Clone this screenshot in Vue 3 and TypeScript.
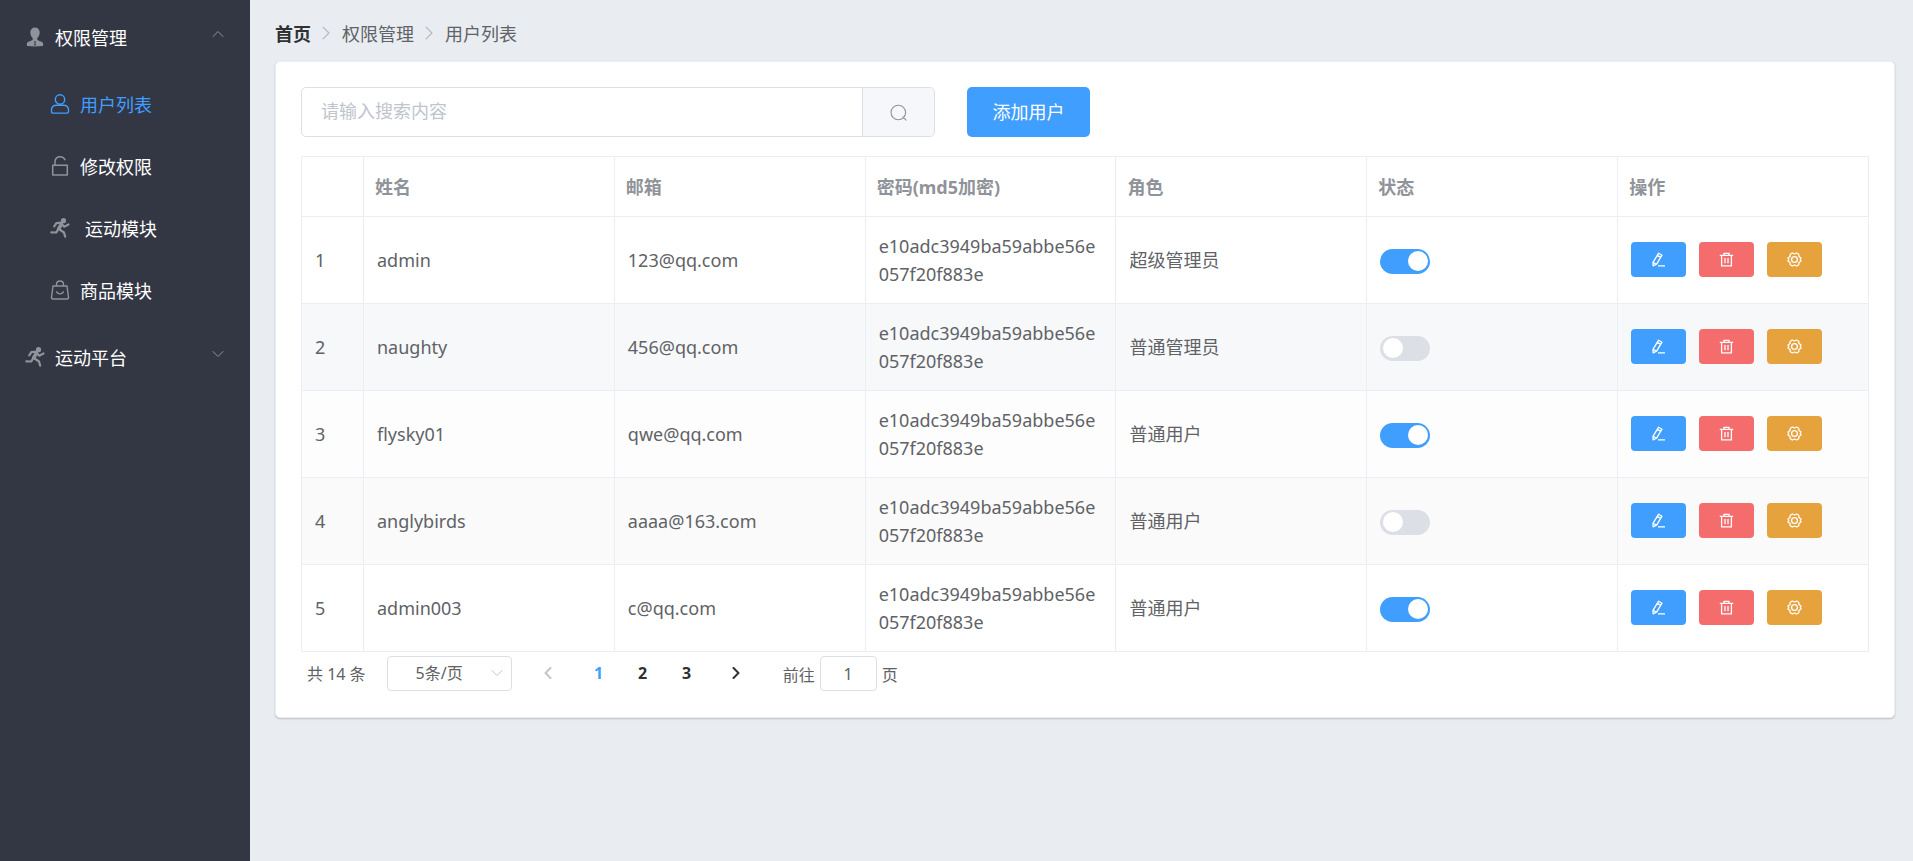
<script setup lang="ts">
import { ref } from 'vue'

type IconName = 'user' | 'lock' | 'run' | 'bag'

interface MenuItem {
  title: string
  icon: IconName
  active?: boolean
}

interface User {
  id: number
  name: string
  email: string
  password: string
  role: string
  enabled: boolean
}

const menuItems: MenuItem[] = [
  { title: '用户列表', icon: 'user', active: true },
  { title: '修改权限', icon: 'lock' },
  { title: '运动模块', icon: 'run' },
  { title: '商品模块', icon: 'bag' },
]

const columns = ['', '姓名', '邮箱', '密码(md5加密)', '角色', '状态', '操作']
const hash = 'e10adc3949ba59abbe56e057f20f883e'

const users = ref<User[]>([
  { id: 1, name: 'admin', email: '123@qq.com', password: hash, role: '超级管理员', enabled: true },
  { id: 2, name: 'naughty', email: '456@qq.com', password: hash, role: '普通管理员', enabled: false },
  { id: 3, name: 'flysky01', email: 'qwe@qq.com', password: hash, role: '普通用户', enabled: true },
  { id: 4, name: 'anglybirds', email: 'aaaa@163.com', password: hash, role: '普通用户', enabled: false },
  { id: 5, name: 'admin003', email: 'c@qq.com', password: hash, role: '普通用户', enabled: true },
])

const query = ref('')
const pageSize = ref(5)
const page = ref(1)
const pages = [1, 2, 3]
</script>

<template>
  <div class="layout">
    <svg class="defs" aria-hidden="true">
      <symbol id="i-solid" viewBox="0 0 20 20">
        <path fill="currentColor" d="M10 .5c2.800 0 4.700 2 4.700 5 0 2.200-.9 4.300-2.400 5.500v1.600c.3.700 1 1 2 1.300 2.300.6 3.900 1.200 3.900 3.100 0 1.400-.2 2-.9 2-2.200.3-4.700.5-7.300.5s-5.100-.2-7.300-.5c-.7 0-.9-.6-.9-2 0-1.900 1.600-2.500 3.900-3.100 1-.3 1.700-.6 2-1.300V11C6.200 9.800 5.300 7.700 5.300 5.500c0-3 1.900-5 4.700-5Z" />
        <path fill="#333744" opacity=".65" d="M9.300 14h1.400l.4 1-.5.8.5 2.500-1.100.8-1.100-.8.5-2.500-.5-.8Z" />
      </symbol>
      <symbol id="i-user" viewBox="0 0 20 20">
        <g fill="none" stroke="currentColor" stroke-width="1.400">
          <circle cx="10" cy="5.500" r="4.700" />
          <path d="M1.500 16.200c0-3.300 2.500-4.900 5.300-4.900h6.400c2.800 0 5.300 1.600 5.300 4.900v1.300c0 1-.6 1.600-1.600 1.600H3.100c-1 0-1.600-.6-1.600-1.600Z" />
        </g>
      </symbol>
      <symbol id="i-lock" viewBox="0 0 20 20">
        <path fill="none" stroke="currentColor" stroke-width="1.500" stroke-linejoin="round" d="M2.700 9.300h14.600v9.800H2.700ZM5 9V5.600C5 2.600 7.200.8 10 .8c2.500 0 4.300 1.300 5.200 3.500" />
      </symbol>
      <symbol id="i-run" viewBox="0 0 20 20">
        <g fill="none" stroke="currentColor" stroke-width="2.200" stroke-linecap="round" stroke-linejoin="round">
          <path d="m4.200 8.300 2.300-3.300 5-.3M12.200 6.500l2 2.200 4.300-2.200" />
          <path stroke-width="3.600" d="m11.400 6.200-2.500 4.300" />
          <path d="m8.500 10.500-2.200 4-5-.2M9.500 11.500l4.500 3 1.200 4.200" />
        </g>
        <circle cx="13.500" cy="2.700" r="2.600" fill="currentColor" />
      </symbol>
      <symbol id="i-bag" viewBox="0 0 20 20">
        <g fill="none" stroke="currentColor" stroke-width="1.400" stroke-linejoin="round" stroke-linecap="round">
          <path d="M3 6h14l1.500 11.300c.1 1-.4 1.700-1.400 1.700H2.900c-1 0-1.500-.7-1.400-1.700ZM6.500 6V4.500C6.500 2.500 8 1 10 1s3.500 1.500 3.500 3.500V6M6.600 11.800c1.600 2.800 5.200 2.800 6.800 0" />
        </g>
      </symbol>
      <symbol id="i-chevron" viewBox="0 0 12 12">
        <path fill="none" stroke="currentColor" stroke-linecap="round" stroke-linejoin="round" d="m1 3.500 5 5 5-5" />
      </symbol>
      <symbol id="i-search" viewBox="0 0 18 18">
        <path fill="none" stroke="currentColor" stroke-width="1.200" stroke-linecap="round" d="M13.600 13.600 17 17M16.500 9a7.700 7.700 0 1 1-15.400 0 7.700 7.700 0 0 1 15.400 0Z" />
      </symbol>
      <symbol id="i-edit" viewBox="0 0 15 15">
        <path fill="none" stroke="currentColor" stroke-width="1.300" stroke-linejoin="round" d="M7.600 1.200 11 3.200 5.600 12.200 2.100 13.800 2 10.400ZM6.400 3.400l3.300 2M2.100 10.300l3.400 2M7 13.800h7" />
      </symbol>
      <symbol id="i-trash" viewBox="0 0 15 15">
        <path fill="none" stroke="currentColor" stroke-width="1.300" d="M.8 3.300h13.400M2.600 3.300v10.500h9.800V3.300M5 3V1.300h5V3M6 6v5.300M9 6v5.300" />
      </symbol>
      <symbol id="i-setting" viewBox="0 0 15 15">
        <g fill="none" stroke="currentColor" stroke-width="1.300" stroke-linejoin="round">
          <path d="m5.300 1 2.200 1L9.700 1l2 1.200.3 2.400 2 1.500-.8 1.400.8 1.400-2 1.500-.3 2.400-2 1.200-2.200-1-2.200 1-2-1.200L3 10.400 1 8.900l.8-1.400L1 6.100l2-1.500.3-2.400Z" />
          <circle cx="7.500" cy="7.500" r="2.900" />
        </g>
      </symbol>
    </svg>

    <aside class="sidebar">
      <nav>
        <button class="menu-title" type="button" aria-expanded="true">
          <svg class="menu-icon"><use href="#i-solid" /></svg>
          <span>权限管理</span>
          <svg class="arrow open"><use href="#i-chevron" /></svg>
        </button>
        <ul class="submenu">
          <li v-for="item in menuItems" :key="item.title">
            <a href="#" class="menu-item" :class="[item.icon, { active: item.active }]">
              <svg class="menu-icon"><use :href="`#i-${item.icon}`" /></svg>
              <span>{{ item.title }}</span>
            </a>
          </li>
        </ul>
        <button class="menu-title" type="button" aria-expanded="false">
          <svg class="menu-icon"><use href="#i-run" /></svg>
          <span>运动平台</span>
          <svg class="arrow"><use href="#i-chevron" /></svg>
        </button>
      </nav>
    </aside>

    <main class="main">
      <nav class="breadcrumb">
        <a href="#" class="home">首页</a>
        <svg class="separator"><use href="#i-chevron" /></svg>
        <span>权限管理</span>
        <svg class="separator"><use href="#i-chevron" /></svg>
        <span>用户列表</span>
      </nav>

      <section class="card">
        <div class="toolbar">
          <form class="search" @submit.prevent>
            <input v-model="query" type="text" placeholder="请输入搜索内容" aria-label="请输入搜索内容" />
            <button type="submit" aria-label="搜索"><svg><use href="#i-search" /></svg></button>
          </form>
          <button class="add" type="button">添加用户</button>
        </div>

        <table class="table">
          <colgroup>
            <col class="index-col" />
            <col v-for="n in 6" :key="n" />
          </colgroup>
          <thead>
            <tr>
              <th v-for="column in columns" :key="column" scope="col">{{ column }}</th>
            </tr>
          </thead>
          <tbody>
            <tr v-for="user in users" :key="user.id">
              <td>{{ user.id }}</td>
              <td>{{ user.name }}</td>
              <td>{{ user.email }}</td>
              <td>{{ user.password }}</td>
              <td>{{ user.role }}</td>
              <td>
                <input v-model="user.enabled" class="switch" type="checkbox" role="switch" :aria-label="`${user.name} 状态`" />
              </td>
              <td>
                <div class="actions">
                  <button class="edit" type="button" aria-label="编辑"><svg><use href="#i-edit" /></svg></button>
                  <button class="delete" type="button" aria-label="删除"><svg><use href="#i-trash" /></svg></button>
                  <button class="setting" type="button" aria-label="设置"><svg><use href="#i-setting" /></svg></button>
                </div>
              </td>
            </tr>
          </tbody>
        </table>

        <div class="pagination">
          <span class="total">共 14 条</span>
          <div class="size">
            <select v-model="pageSize" aria-label="每页条数">
              <option :value="5">5条/页</option>
              <option :value="10">10条/页</option>
            </select>
            <svg><use href="#i-chevron" /></svg>
          </div>
          <button class="step prev" type="button" aria-label="上一页" disabled><svg><use href="#i-chevron" /></svg></button>
          <button
            v-for="n in pages"
            :key="n"
            class="page"
            :class="{ current: n === page }"
            type="button"
            @click="page = n"
          >{{ n }}</button>
          <button class="step next" type="button" aria-label="下一页"><svg><use href="#i-chevron" /></svg></button>
          <label class="jump">前往<input v-model.number="page" type="text" />页</label>
        </div>
      </section>
    </main>
  </div>
</template>

<style>
body {
  background: #e9edf1;
}
</style>

<style scoped>
* {
  box-sizing: border-box;
}

.layout {
  display: flex;
  min-height: 100vh;
  color: #606266;
  font-family: "Noto Sans", "Noto Sans CJK SC", sans-serif;
  font-size: 18px;
}

.defs {
  position: absolute;
  width: 0;
  height: 0;
}

button,
input,
select {
  padding: 0;
  border: 0;
  background: none;
  color: inherit;
  font: inherit;
}

button {
  cursor: pointer;
}

a {
  color: inherit;
  text-decoration: none;
}

.sidebar {
  flex: 0 0 250px;
  background: #333744;
  color: #fff;
}

.menu-title {
  display: flex;
  align-items: center;
  width: 100%;
  height: 70px;
  padding: 3px 26px 0 25px;
}

.menu-icon {
  width: 20px;
  height: 20px;
  margin-right: 10px;
  color: #909399;
}

.arrow {
  width: 12px;
  height: 12px;
  margin: 0 0 6px auto;
  color: #909399;
}

.arrow.open {
  transform: rotate(180deg);
}

.submenu {
  margin: 0;
  padding: 1px 0;
  list-style: none;
}

.menu-item {
  display: flex;
  align-items: center;
  height: 62px;
  padding: 3px 0 0 50px;
}

.menu-item.run .menu-icon {
  margin-right: 15px;
}

.menu-item.active,
.menu-item.active .menu-icon {
  color: #409eff;
}

.main {
  flex: 1;
  min-width: 0;
  padding: 21px 18px 21px 25px;
}

.breadcrumb {
  display: flex;
  align-items: center;
  height: 24px;
  margin-bottom: 16px;
}

.home {
  color: #303133;
  font-weight: 700;
}

.separator {
  width: 14px;
  height: 14px;
  margin: 0 9px 0 8px;
  color: #b4b8c0;
  transform: rotate(-90deg);
}

.card {
  padding: 25px 25px 26px;
  border: 1px solid #ebeef5;
  border-radius: 5px;
  background: #fff;
  box-shadow: 0 1px 2px rgba(0, 0, 0, 0.2);
}

.toolbar {
  display: flex;
  gap: 32px;
  margin-bottom: 19px;
}

.search {
  display: flex;
  flex: 0 1 634px;
  height: 50px;
  border: 1px solid #dcdfe6;
  border-radius: 5px;
  overflow: hidden;
}

.search input {
  flex: 1;
  min-width: 0;
  padding: 0 19px 2px;
  outline: none;
}

.search input::placeholder {
  color: #c0c4cc;
  opacity: 1;
}

.search button {
  display: flex;
  align-items: center;
  justify-content: center;
  width: 72px;
  border-left: 1px solid #dcdfe6;
  background: #f5f7fa;
  color: #909399;
}

.search svg {
  width: 17px;
  height: 17px;
}

.add {
  width: 123px;
  height: 50px;
  padding-bottom: 3px;
  border-radius: 5px;
  background: #409eff;
  color: #fff;
}

.table {
  width: 100%;
  border-top: 1px solid #ebeef5;
  border-left: 1px solid #ebeef5;
  border-spacing: 0;
  table-layout: fixed;
  line-height: 28px;
}

.index-col {
  width: 62px;
}

.table th,
.table td {
  padding: 15px 12px 15px 13px;
  border-right: 1px solid #ebeef5;
  border-bottom: 1px solid #ebeef5;
  text-align: left;
  word-break: break-all;
}

.table th {
  height: 60px;
  padding-left: 11px;
  color: #909399;
}

.table tbody tr:nth-child(2) {
  background: #f6f8fa;
}

.table tbody tr:nth-child(3) {
  background: #fdfdfd;
}

.table tbody tr:nth-child(4) {
  background: #fafafa;
}

.switch {
  display: block;
  width: 50px;
  height: 25px;
  margin: 2px 0 0;
  border-radius: 13px;
  background: #dcdfe6;
  appearance: none;
  overflow: hidden;
  cursor: pointer;
}

.switch::before {
  content: "";
  display: block;
  width: 20px;
  height: 20px;
  margin: 2px 3px;
  border-radius: 50%;
  background: #fff;
}

.switch:checked {
  background: #409eff;
}

.switch:checked::before {
  margin-left: 28px;
}

.actions {
  display: flex;
  gap: 13px;
  padding-bottom: 2px;
}

.actions button {
  display: flex;
  align-items: center;
  justify-content: center;
  width: 55px;
  height: 35px;
  border-radius: 4px;
  color: #fff;
}

.actions svg {
  width: 15px;
  height: 15px;
}

.edit {
  background: #409eff;
}

.delete {
  background: #f56c6c;
}

.setting {
  background: #e6a23c;
}

.pagination {
  display: flex;
  align-items: center;
  padding: 4px 6px 0;
  font-size: 16px;
}

.total {
  padding-bottom: 2px;
}

.size {
  position: relative;
  width: 125px;
  margin: 0 18px 0 21px;
}

.size select {
  width: 100%;
  height: 35px;
  padding: 0 20px 2px 0;
  border: 1px solid #dcdfe6;
  border-radius: 4px;
  appearance: none;
  text-align: center;
  text-align-last: center;
}

.size svg {
  position: absolute;
  top: 11px;
  right: 9px;
  width: 12px;
  height: 12px;
  color: #c0c4cc;
  pointer-events: none;
}

.page {
  width: 44px;
  height: 35px;
  padding-bottom: 2px;
  color: #303133;
  font-weight: 700;
}

.page.current {
  color: #409eff;
}

.step {
  display: flex;
  align-items: center;
  justify-content: center;
  width: 36px;
  height: 35px;
  padding-bottom: 2px;
  color: #303133;
}

.step svg {
  width: 12px;
  height: 12px;
  stroke-width: 2;
}

.next svg {
  stroke-width: 1;
}

.prev {
  margin-right: 11px;
  color: #c0c4cc;
}

.next {
  margin-left: 9px;
}

.prev svg {
  transform: rotate(90deg);
}

.next svg {
  stroke-width: 2;
  transform: rotate(-90deg);
}

.jump {
  display: flex;
  align-items: center;
  margin-left: 29px;
}

.jump input {
  width: 57px;
  height: 35px;
  margin: 0 5px;
  border: 1px solid #dcdfe6;
  border-radius: 4px;
  text-align: center;
}
</style>
